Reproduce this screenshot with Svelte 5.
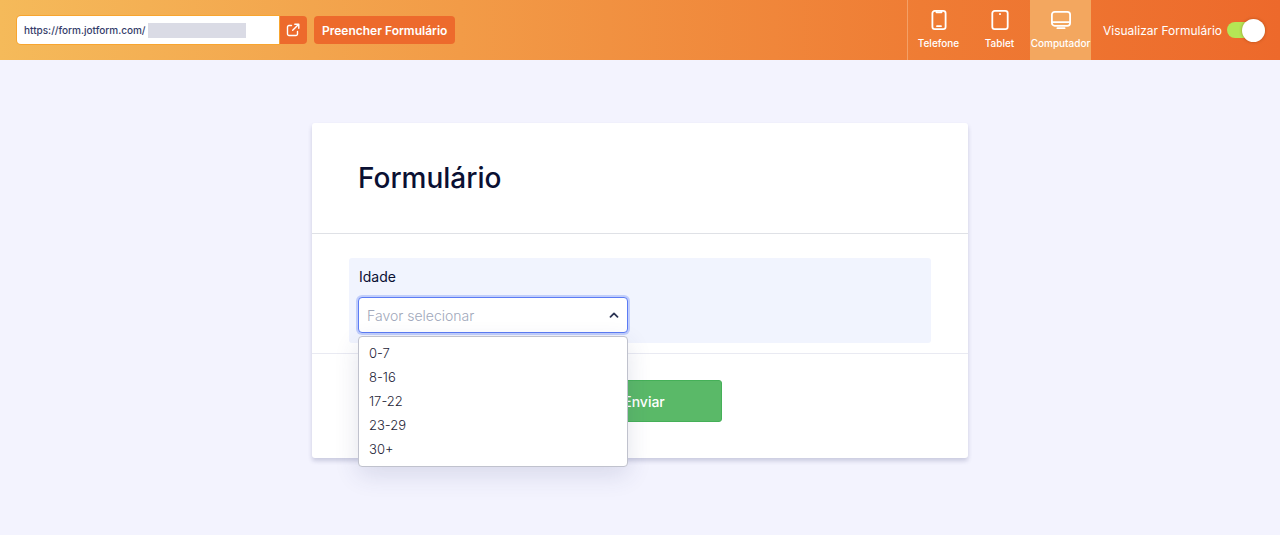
<script>
	const devices = [
		{ id: "phone", label: "Telefone" },
		{ id: "tablet", label: "Tablet" },
		{ id: "desktop", label: "Computador" },
	];
	const ages = ["0-7", "8-16", "17-22", "23-29", "30+"];

	let formUrl = $state("https://form.jotform.com/");
	let device = $state("desktop");
	let preview = $state(true);
	let age = $state("");
	let open = $state(true);

	function toggleMenu(e) {
		// keep the native popup closed, the list below replaces it
		e.preventDefault();
		open = !open;
	}

	function pickAge(value) {
		age = value;
		open = false;
	}
</script>

<header class="toolbar">
	<div class="link-box">
		<div class="url-field">
			<input
				class="url-input"
				type="text"
				aria-label="URL"
				bind:value={formUrl}
			/>
			<span class="url-mask"></span>
		</div>
		<a class="open-link" href={formUrl} aria-label="Abrir">
			<svg width="14" height="14" viewBox="0 0 14 14">
				<path d="M5.5 2.5H3A1.5 1.5 0 0 0 1.5 4v7A1.5 1.5 0 0 0 3 12.5h7a1.5 1.5 0 0 0 1.5-1.5V8.5" />
				<path d="M8.8 1.2h4v4M12.5 1.5 6.7 7.3" />
			</svg>
		</a>
	</div>
	<button class="btn-fill">Preencher Formulário</button>

	<div class="devices">
		{#each devices as item}
			<button
				class="device"
				class:active={device === item.id}
				onclick={() => (device = item.id)}
			>
				<svg width="22" height="22" viewBox="0 0 22 22">
					{#if item.id === "phone"}
						<rect x="4.4" y="1.9" width="13.2" height="18.2" rx="2.4" />
						<path d="M8.5 2.2v1.1h5V2.2" />
						<path d="M9 17.2h4" />
					{:else if item.id === "tablet"}
						<rect x="3.3" y="1.9" width="15.4" height="18.2" rx="2.4" />
						<path d="M11 4.8v.4" />
					{:else}
						<rect x="1.9" y="2.8" width="18.2" height="14" rx="2.8" />
						<path d="M2 13.1h18" />
						<path d="M7.4 19.2h7.2" />
					{/if}
				</svg>
				<span>{item.label}</span>
			</button>
		{/each}
	</div>

	<label class="preview">
		<span>Visualizar Formulário</span>
		<input class="switch" type="checkbox" role="switch" bind:checked={preview} />
	</label>
</header>

<main>
	<form class="card" onsubmit={(e) => e.preventDefault()}>
		<div class="card-header">
			<h1>Formulário</h1>
		</div>

		<div class="card-body">
			<div class="question">
				<label for="age">Idade</label>
				<div class="select-wrap">
					<select
						id="age"
						class:open
						class:placeholder={!age}
						bind:value={age}
						onmousedown={toggleMenu}
					>
						<option value="">Favor selecionar</option>
						{#each ages as option}
							<option value={option}>{option}</option>
						{/each}
					</select>
					<svg class="chevron" class:open width="10" height="6" viewBox="0 0 10 6">
						<path d="M1.5 1.2 5 4.6 8.5 1.2" />
					</svg>
					{#if open}
						<div class="menu">
							{#each ages as option}
								<button type="button" onclick={() => pickAge(option)}>
									{option}
								</button>
							{/each}
						</div>
					{/if}
				</div>
			</div>
		</div>

		<div class="card-footer">
			<button class="btn-submit" type="submit">Enviar</button>
		</div>
	</form>
</main>

<style>
	:global(body) {
		background: #f3f3fe;
		font-family: Inter, "Liberation Sans", sans-serif;
		color: #0a1033;
	}

	button,
	input,
	select {
		font-family: inherit;
		margin: 0;
	}

	button {
		border: none;
		cursor: pointer;
	}

	svg {
		fill: none;
		stroke: currentColor;
		stroke-width: 1.8;
		stroke-linecap: round;
		stroke-linejoin: round;
	}

	.toolbar {
		display: flex;
		align-items: center;
		height: 60px;
		padding-left: 17px;
		padding-right: 15px;
		background: linear-gradient(90deg, #f5ba5a 0%, #ef7c34 72%, #ed692b 100%);
		color: #fff;
	}

	.link-box {
		display: flex;
		margin-right: 7px;
	}

	.url-field {
		position: relative;
		width: 262px;
	}

	.url-input {
		display: block;
		box-sizing: border-box;
		width: 100%;
		height: 28px;
		padding: 0 7px;
		border: none;
		border-radius: 4px 0 0 4px;
		background: #fff;
		box-shadow: 0 0 0 1px #f8a52f;
		color: #343c6a;
		font-size: 10px;
		font-weight: 500;
		outline: none;
	}

	.url-mask {
		position: absolute;
		top: 7px;
		left: 131px;
		width: 98px;
		height: 15px;
		background: #dadbe5;
	}

	.open-link {
		display: flex;
		align-items: center;
		justify-content: center;
		width: 28px;
		height: 28px;
		border-radius: 0 4px 4px 0;
		background: #ed6a2c;
		color: #fff;
	}

	.open-link svg {
		stroke-width: 1.4;
	}

	.btn-fill {
		height: 28px;
		padding: 0 8px;
		border-radius: 4px;
		background: #ed6a2c;
		color: #fff;
		font-size: 12px;
		font-weight: 600;
		white-space: nowrap;
	}

	.devices {
		display: flex;
		align-self: stretch;
		margin-left: auto;
		border-left: 1px solid #f4a066;
	}

	.device {
		display: flex;
		flex-direction: column;
		align-items: center;
		gap: 4px;
		width: 61px;
		padding: 9px 0 0;
		background: none;
		color: #fff;
		font-size: 10px;
		font-weight: 500;
		line-height: 16px;
	}

	.device.active {
		background: #f3a75f;
	}

	.preview {
		display: flex;
		align-items: center;
		gap: 5px;
		margin-left: 12px;
		font-size: 12px;
		white-space: nowrap;
	}

	.switch {
		appearance: none;
		display: flex;
		align-items: center;
		width: 38px;
		height: 16px;
		border-radius: 8px;
		background: #d0d3df;
		cursor: pointer;
	}

	.switch::before {
		content: "";
		width: 23px;
		height: 23px;
		flex-shrink: 0;
		border-radius: 50%;
		background: #fff;
		box-shadow: 0 0 3px rgba(120, 50, 0, 0.5);
	}

	.switch:checked {
		justify-content: flex-end;
		background: #b5e655;
	}

	main {
		padding: 63px 16px;
	}

	.card {
		max-width: 656px;
		margin: 0 auto;
		border-radius: 3px;
		background: #fff;
		box-shadow: 0 3px 4px rgba(60, 65, 120, 0.22);
	}

	.card-header {
		padding: 37px 46px;
		border-bottom: 1px solid #dfe1e6;
	}

	h1 {
		margin: 0;
		font-size: 28px;
		font-weight: 500;
		line-height: 36px;
	}

	.card-body {
		padding: 24px 37px 10px;
		border-bottom: 1px solid #e9eaf2;
	}

	.question {
		padding: 9px 9px 10px;
		border-radius: 3px;
		background: #f1f4fe;
	}

	.question label {
		display: block;
		margin-bottom: 10px;
		padding-left: 1px;
		font-size: 14px;
		font-weight: 400;
		line-height: 20px;
	}

	.select-wrap {
		position: relative;
		max-width: 270px;
	}

	select {
		appearance: none;
		display: block;
		box-sizing: border-box;
		width: 100%;
		height: 36px;
		padding: 0 28px 0 8px;
		border: 1px solid #c3cad8;
		border-radius: 4px;
		background: #fff;
		color: #0a1033;
		font-size: 14px;
		outline: none;
	}

	select.placeholder {
		color: #a0a7ba;
		font-weight: 300;
	}

	select.open {
		border-color: #5c7cf4;
		box-shadow: 0 0 0 2px #c1cefb;
	}

	.chevron {
		position: absolute;
		top: 15px;
		right: 9px;
		color: #2c3554;
		pointer-events: none;
	}

	.chevron.open {
		transform: rotate(180deg);
	}

	.menu {
		position: absolute;
		top: 100%;
		left: 0;
		right: 0;
		z-index: 1;
		margin-top: 3px;
		padding: 4px 0 5px;
		border: 1px solid #c0c2cd;
		border-radius: 4px;
		background: #fff;
		box-shadow: 0 8px 24px rgba(50, 55, 110, 0.14);
	}

	.menu button {
		display: block;
		width: 100%;
		padding: 0 10px;
		background: none;
		color: #1d2336;
		font-size: 13px;
		font-weight: 300;
		line-height: 24px;
		text-align: left;
	}

	.menu button:hover {
		background: #f1f4fe;
	}

	.card-footer {
		display: flex;
		justify-content: center;
		padding: 26px 46px 36px 54px;
	}

	.btn-submit {
		width: 156px;
		height: 42px;
		padding: 0;
		border: 1px solid #45b058;
		border-radius: 3px;
		background: #5ab968;
		color: #fff;
		font-size: 14px;
		font-weight: 500;
	}
</style>
